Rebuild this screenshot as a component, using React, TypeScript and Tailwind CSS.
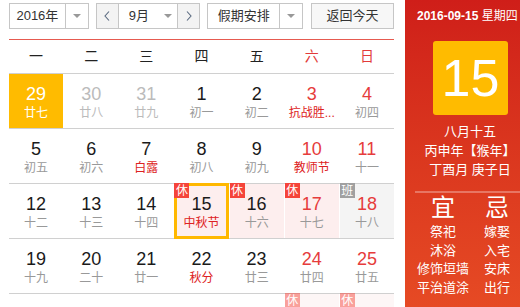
type Day = {
  d: number;
  l: string;
  red?: boolean;
  fest?: boolean;
  other?: boolean;
  badge?: "休" | "班";
  today?: boolean;
  sel?: boolean;
};

const weeks: Day[][] = [
  [
    { d: 29, l: "廿七", other: true, sel: true },
    { d: 30, l: "廿八", other: true },
    { d: 31, l: "廿九", other: true },
    { d: 1, l: "初一" },
    { d: 2, l: "初二" },
    { d: 3, l: "抗战胜...", red: true, fest: true },
    { d: 4, l: "初四", red: true },
  ],
  [
    { d: 5, l: "初五" },
    { d: 6, l: "初六" },
    { d: 7, l: "白露", fest: true },
    { d: 8, l: "初八" },
    { d: 9, l: "初九" },
    { d: 10, l: "教师节", red: true, fest: true },
    { d: 11, l: "十一", red: true },
  ],
  [
    { d: 12, l: "十二" },
    { d: 13, l: "十三" },
    { d: 14, l: "十四" },
    { d: 15, l: "中秋节", fest: true, badge: "休", today: true },
    { d: 16, l: "十六", badge: "休" },
    { d: 17, l: "十七", red: true, badge: "休" },
    { d: 18, l: "十八", red: true, badge: "班" },
  ],
  [
    { d: 19, l: "十九" },
    { d: 20, l: "二十" },
    { d: 21, l: "廿一" },
    { d: 22, l: "秋分", fest: true },
    { d: 23, l: "廿三" },
    { d: 24, l: "廿四", red: true },
    { d: 25, l: "廿五", red: true },
  ],
  [
    { d: 26, l: "廿六" },
    { d: 27, l: "廿七" },
    { d: 28, l: "廿八" },
    { d: 29, l: "廿九" },
    { d: 30, l: "三十" },
    { d: 1, l: "国庆节", other: true, fest: true, badge: "休" },
    { d: 2, l: "初二", other: true, badge: "休" },
  ],
];

const yi = ["祭祀", "沐浴", "修饰垣墙", "平治道涂"];
const ji = ["嫁娶", "入宅", "安床", "出行"];

function Caret() {
  return (
    <svg width="8" height="4" viewBox="0 0 8 4">
      <polygon points="0,0 8,0 4,4" fill="#999" />
    </svg>
  );
}

function Chevron({ dir }: { dir: "l" | "r" }) {
  return (
    <svg width="6" height="10" viewBox="0 0 6 10">
      <polyline
        points={dir === "l" ? "5,0.5 1,5 5,9.5" : "1,0.5 5,5 1,9.5"}
        fill="none"
        stroke="#5a6a80"
        strokeWidth="1.1"
      />
    </svg>
  );
}

function Cell({ day }: { day: Day }) {
  let bg = "bg-white";
  if (day.sel) bg = "bg-[#ffbb00]";
  else if (day.badge === "休") bg = "bg-[#fdeeee]";
  else if (day.badge === "班") bg = "bg-[#f4f4f4]";

  let num = "text-[#1a1a1a]";
  if (day.sel) num = "text-white";
  else if (day.other) num = "text-[#bbb]";
  else if (day.red) num = "text-[#e63c3c]";

  let lunar = "text-[#999]";
  if (day.sel) lunar = "text-white";
  else if (day.other) lunar = "text-[#bbb]";
  else if (day.fest) lunar = "text-[#dd2222]";

  const faded = day.other && day.badge ? "opacity-50" : "";

  return (
    <div className={`relative h-[54px] pt-[9px] text-center ${bg} ${faded}`}>
      {day.today && (
        <div className="absolute -top-px left-0 right-0 -bottom-px border-[3px] border-[#ffb800]" />
      )}
      {day.badge && (
        <span
          className={`absolute -top-px left-0 z-10 flex h-[15px] w-[15px] items-center justify-center text-[12px] leading-none text-white ${
            day.badge === "休" ? "bg-[#f5443a]" : "bg-[#a0a0a0]"
          }`}
        >
          {day.badge}
        </span>
      )}
      <div className={`text-[18px] leading-[22px] ${num}`}>{day.d}</div>
      <div className={`whitespace-nowrap text-[12px] leading-[16px] ${lunar}`}>{day.l}</div>
    </div>
  );
}

export default function App() {
  return (
    <div className="flex h-[307px] w-[520px] overflow-hidden bg-white font-[Liberation_Sans,Noto_Sans_CJK_SC,sans-serif]">
      <div className="w-[405px] pl-[9px] pr-[11px]">
        <div className="mt-[3px] flex h-[26px] text-[13px] text-[#333]">
          <div className="flex w-[80px] border border-[#c6c6c6]">
            <span className="flex flex-1 items-center justify-center">2016年</span>
            <span className="flex w-[23px] items-center justify-center border-l border-[#c6c6c6]">
              <Caret />
            </span>
          </div>
          <div className="ml-[7px] flex w-[105px] border border-[#c6c6c6]">
            <span className="flex w-[21px] items-center justify-center bg-[#f3f3f3]">
              <Chevron dir="l" />
            </span>
            <span className="flex flex-1 border-x border-[#c6c6c6]">
              <span className="flex w-[40px] items-center justify-center">9月</span>
              <span className="flex flex-1 items-center justify-center">
                <Caret />
              </span>
            </span>
            <span className="flex w-[21px] items-center justify-center bg-[#f3f3f3]">
              <Chevron dir="r" />
            </span>
          </div>
          <div className="ml-[7px] flex w-[96px] border border-[#c6c6c6]">
            <span className="flex flex-1 items-center justify-center">假期安排</span>
            <span className="flex w-[23px] items-center justify-center border-l border-[#c6c6c6]">
              <Caret />
            </span>
          </div>
          <div className="ml-[8px] flex w-[83px] items-center justify-center border border-[#c6c6c6] bg-[#f7f7f7]">
            返回今天
          </div>
        </div>

        <div className="mt-[10px] h-px bg-[#e65a50]" />

        <div className="grid h-[34px] grid-cols-7 gap-x-px border-b border-[#d0d0d0] text-[14px] text-[#222]">
          {["一", "二", "三", "四", "五", "六", "日"].map((w, i) => (
            <div
              key={w}
              className={`flex items-center justify-center ${i > 4 ? "text-[#e23a3a]" : ""}`}
            >
              {w}
            </div>
          ))}
        </div>

        {weeks.map((week, wi) => (
          <div key={wi} className="grid grid-cols-7 gap-x-px border-b border-[#d0d0d0]">
            {week.map((day, di) => (
              <Cell key={di} day={day} />
            ))}
          </div>
        ))}
      </div>

      <div className="h-[307px] w-[115px] overflow-hidden bg-linear-to-b from-[#cf1e19] to-[#e64a24] text-white">
        <div className="whitespace-nowrap pl-[12px] pt-[6px] text-[12px] leading-[20px]">
          <b>2016-09-15</b> 星期四
        </div>
        <div className="ml-[28px] mt-[15px] flex h-[74px] w-[75px] items-center justify-center rounded-[3px] bg-[#ffbb00] text-[52px] leading-none">
          15
        </div>
        <div className="mt-[7px] whitespace-nowrap pl-[15px] text-center text-[13px] leading-[19px]">
          <div>八月十五</div>
          <div>丙申年【猴年】</div>
          <div>丁酉月 庚子日</div>
        </div>
        <div className="ml-[10px] mt-[12px] h-[2px] bg-white/30" />
        <div className="grid grid-cols-[60px_48px] pl-[8px] text-center">
          <div className="text-[24px] leading-[30px]">宜</div>
          <div className="text-[24px] leading-[30px]">忌</div>
          <div className="text-[13px] leading-[18.5px] whitespace-nowrap">
            {yi.map((t) => (
              <div key={t}>{t}</div>
            ))}
          </div>
          <div className="text-[13px] leading-[18.5px] whitespace-nowrap">
            {ji.map((t) => (
              <div key={t}>{t}</div>
            ))}
          </div>
        </div>
      </div>
    </div>
  );
}
